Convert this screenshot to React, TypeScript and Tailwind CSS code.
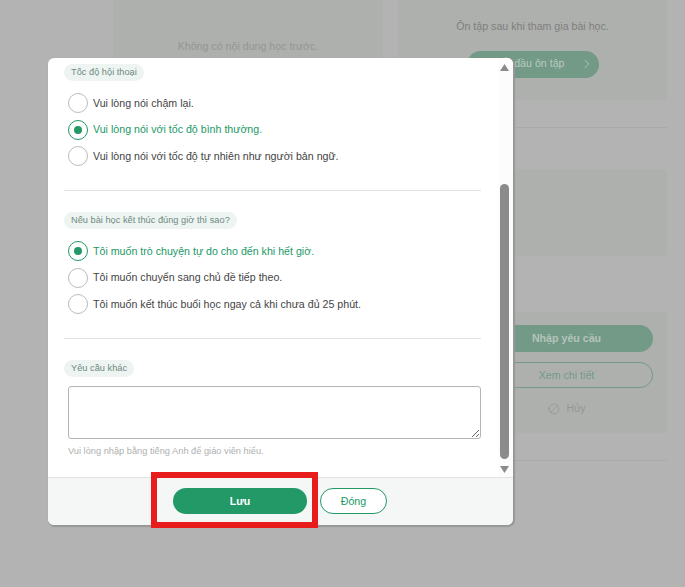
import React from "react";
import { ChevronRight, Ban } from "lucide-react";

function Radio({ label, checked }: { label: string; checked?: boolean }) {
  return (
    <label className={`flex h-[26.5px] items-center gap-[5px] text-[10.65px] ${checked ? "text-[#229966]" : "text-[#444444]"}`}>
      <span className={`flex h-5 w-5 items-center justify-center rounded-full border bg-white ${checked ? "border-[#229966]" : "border-[#bbbbbb]"}`}>
        {checked && <span className="h-2 w-2 rounded-full bg-[#229966]" />}
      </span>
      <span className="pt-px">{label}</span>
    </label>
  );
}

function Chip({ children }: { children: React.ReactNode }) {
  return (
    <div className="flex h-[17px] w-fit items-center rounded-full bg-[#eef4f2] px-[7px] text-[9.25px] text-[#6d8a80]">
      {children}
    </div>
  );
}

export default function App() {
  return (
    <div className="relative h-[587px] w-[685px] overflow-hidden bg-[#b3b3b3] font-['Liberation_Sans',Arial,sans-serif]">
      {/* page behind the dialog */}
      <div className="flex gap-[15px] pl-[113px]">
        <div className="h-[300px] w-[270px] rounded-b bg-[#aeb0ae] pt-[39px] text-center text-[10.65px] text-[#939694]">
          Không có nội dung học trước.
        </div>
        <div className="w-[269px]">
          <div className="flex h-[100px] flex-col items-center rounded-b bg-[#aeb0ae] pt-[19px]">
            <div className="text-[10.65px] text-[#7f7f7d]">Ôn tập sau khi tham gia bài học.</div>
            <div className="mt-[16px] flex h-[27px] w-[132px] items-center justify-end gap-[15px] rounded-full bg-[#739a87] pr-[5px] text-[10.65px] text-[#b9c9c0]">
              <span>Bắt đầu ôn tập</span>
              <ChevronRight className="h-3.5 w-3.5" strokeWidth={1.5} />
            </div>
          </div>
          <div className="mt-[27px] h-px bg-[#a9a9a9]" />
          <div className="mt-[41px] h-[87px] rounded bg-[#aeb0ae]" />
          <div className="mt-[56px] flex h-[121px] flex-col rounded bg-[#aeb0ae] pl-[82px] pr-[14px] pt-[13px]">
            <div className="flex h-[27px] items-center justify-center rounded-full bg-[#739a87] pt-px text-[10.65px] font-bold text-[#b4c4bb]">Nhập yêu cầu</div>
            <div className="mt-[10px] flex h-[26px] items-center justify-center rounded-full border border-[#739a87] pt-px text-[10.65px] text-[#739a87]">Xem chi tiết</div>
            <div className="mt-[14px] flex h-[14px] items-center justify-center gap-[7px] text-[10.65px] text-[#939694]">
              <Ban className="h-3 w-3 -scale-x-100" strokeWidth={1.5} />
              Hủy
            </div>
          </div>
          <div className="mt-[27px] h-px bg-[#a9a9a9]" />
        </div>
      </div>

      {/* dialog */}
      <div className="absolute left-[48px] top-[58px] flex h-[467px] w-[465px] flex-col overflow-hidden rounded-[6px] bg-white shadow-[1px_1px_1px_1px_#979797]">
        <div className="flex h-[419px] min-h-0">
          <div className="flex-1 pl-[16px] pr-[17px]">
            <div className="mt-[6px]">
              <Chip>Tốc độ hội thoại</Chip>
              <div className="mt-[9px] pl-[4px]">
                <Radio label="Vui lòng nói chậm lại." />
                <Radio label="Vui lòng nói với tốc độ bình thường." checked />
                <Radio label="Vui lòng nói với tốc độ tự nhiên như người bản ngữ." />
              </div>
            </div>
            <div className="mt-[20.5px] h-px bg-[#e2e2e2]" />
            <div className="mt-[21px]">
              <Chip>Nếu bài học kết thúc đúng giờ thì sao?</Chip>
              <div className="mt-[9px] pl-[4px]">
                <Radio label="Tôi muốn trò chuyện tự do cho đến khi hết giờ." checked />
                <Radio label="Tôi muốn chuyển sang chủ đề tiếp theo." />
                <Radio label="Tôi muốn kết thúc buổi học ngay cả khi chưa đủ 25 phút." />
              </div>
            </div>
            <div className="mt-[20.5px] h-px bg-[#e2e2e2]" />
            <div className="mt-[21px]">
              <Chip>Yêu cầu khác</Chip>
              <textarea className="ml-[4px] mt-[9px] block h-[53px] w-[413px] rounded-[3px] border border-[#b5b5b5] bg-white" />
              <p className="ml-[4px] mt-[6px] text-[9.25px] text-[#b0b0b0]">Vui lòng nhập bằng tiếng Anh để giáo viên hiểu.</p>
            </div>
          </div>
          {/* scrollbar */}
          <div className="flex w-[15px] flex-col items-center bg-[#fcfcfc] pr-[3px]">
            <svg width="9" height="7" viewBox="0 0 9 7" className="mt-[6px]"><path d="M4.5 0 9 7H0z" fill="#8b8b8b" /></svg>
            <div className="mt-[113px] h-[275px] w-[9px] shrink-0 rounded-full bg-[#8b8b8b]" />
            <svg width="9" height="7" viewBox="0 0 9 7" className="mt-[7px]"><path d="M0 0h9L4.500 7z" fill="#8b8b8b" /></svg>
          </div>
        </div>
        <div className="flex h-[48px] items-start justify-center gap-[13px] border-t border-[#e2e2e2] bg-[#f5f7f6] pr-px pt-[10px]">
          <button className="h-[26px] w-[134px] rounded-full bg-[#229966] pt-px text-[10.65px] font-bold text-white">Lưu</button>
          <button className="h-[26px] w-[67px] rounded-full border border-[#229966] bg-white pt-px text-[10.65px] text-[#229966]">Đóng</button>
        </div>
      </div>

      {/* highlight box */}
      <div className="absolute left-[151px] top-[472px] h-[56px] w-[167px] border-[6px] border-[#e81c1c]" />
    </div>
  );
}
